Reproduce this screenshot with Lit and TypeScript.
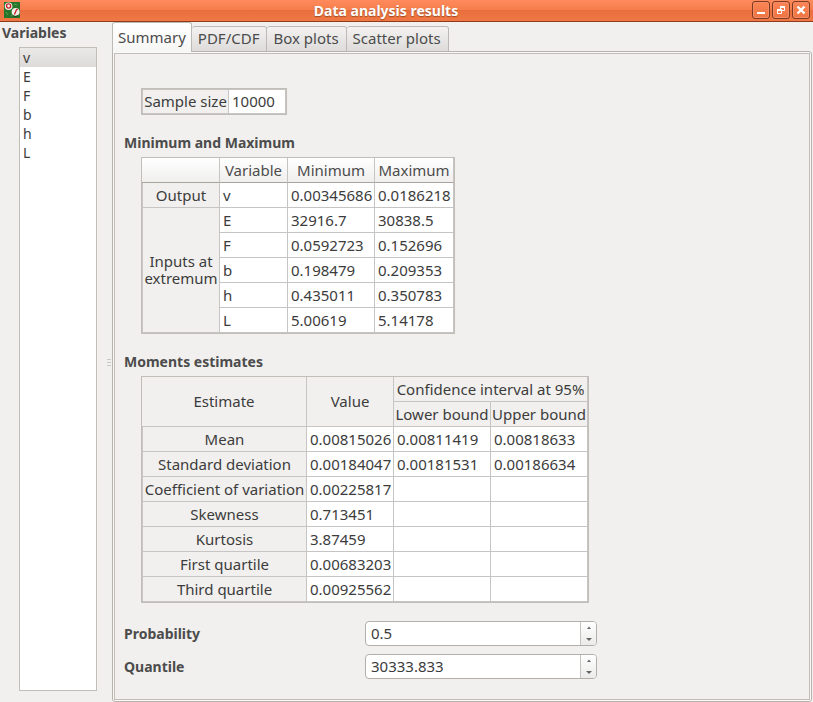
import { LitElement, html, css, svg } from "lit";
import { customElement, property, state } from "lit/decorators.js";

const FONT = css`"Noto Sans", "Open Sans", sans-serif`;

@customElement("title-bar")
class TitleBar extends LitElement {
  static styles = css`
    :host {
      display: flex;
      align-items: center;
      box-sizing: border-box;
      height: 22px;
      padding: 0 3px 1px 4px;
      background: linear-gradient(#ff8a5c, #f57e4c 45%, #e9703e 50%, #f07844);
      border-bottom: 1px solid #8f3c1c;
    }
    .logo { width: 16px; height: 16px; display: block; }
    .title {
      flex: 1;
      margin: 0;
      padding-top: 2px;
      text-align: center;
      font: bold 14px/18px ${FONT};
      color: #fff;
      text-shadow: 0 1px 1px #a04a26;
    }
    .controls { display: flex; gap: 2px; }
    button {
      box-sizing: border-box;
      width: 18px;
      height: 18px;
      padding: 0;
      border: 1px solid #7e3a20;
      border-radius: 3px;
      background: linear-gradient(#fb8557, #ee7442);
      box-shadow: inset 0 0 0 1px #f58e66;
    }
    button svg { display: block; width: 16px; height: 16px; }
  `;

  render() {
    const glyphs = [
      ["Minimize", svg`<path d="M4 10h8v2h-8z" fill="#fff"/>`],
      ["Restore", svg`<path d="M7.5 4.5h4v4h-4zM4.5 7.5h4v4h-4z" fill="none" stroke="#fff"/><path d="M7 4h5v2h-5zM4 7h5v2h-5z" fill="#fff"/>`],
      ["Close", svg`<path d="M4.5 4.5L11.5 11.5M11.5 4.5L4.5 11.5" stroke="#fff" stroke-width="2.4"/>`],
    ];
    return html`
      <svg class="logo" viewBox="0 0 16 16" aria-hidden="true">
        <rect width="16" height="16" fill="#26752b" />
        <path d="M2 10l2 3M7 13l2 1M10 2l3 1" stroke="#5aa04e" />
        <circle cx="4.6" cy="4.2" r="3.8" fill="#f4efe9" />
        <circle cx="4.6" cy="4" r="2.1" fill="none" stroke="#c8202a" stroke-width="1.3" />
        <circle cx="11.6" cy="10" r="4" fill="#f4efe9" />
        <path d="M10.4 12.4l2-4.4l1.4-1" fill="none" stroke="#c8202a" stroke-width="1.3" />
        <path d="M8.4 13a4 4 0 0 0 6 0" fill="none" stroke="#143d17" />
      </svg>
      <h1 class="title">Data analysis results</h1>
      <div class="controls">
        ${glyphs.map(([label, shape]) => html`
          <button aria-label=${label}><svg viewBox="0 0 16 16">${shape}</svg></button>`)}
      </div>
    `;
  }
}

@customElement("spin-box")
class SpinBox extends LitElement {
  @property() label = "";
  @property() value = "";

  static styles = css`
    :host { display: grid; grid-template-columns: 241px 232px; align-items: center; }
    label { font: bold 14px/20px ${FONT}; color: #4c4c4c; }
    .box {
      display: flex;
      box-sizing: border-box;
      height: 25px;
      border: 1px solid #b2aea9;
      border-radius: 4px;
      background: #fff;
      overflow: hidden;
    }
    input {
      flex: 1;
      min-width: 0;
      padding: 0 5px;
      border: 0;
      outline: 0;
      background: none;
      font: 15px/23px ${FONT};
      color: #3c3c3c;
    }
    .steps {
      display: flex;
      flex-direction: column;
      width: 15px;
      border-left: 1px solid #c6c3bf;
      background: linear-gradient(#fff, #ecebea);
    }
    button {
      flex: 1;
      display: flex;
      align-items: center;
      justify-content: center;
      padding: 0;
      border: 0;
      background: none;
    }
    svg { width: 6px; height: 3px; }
  `;

  render() {
    return html`
      <label for="field">${this.label}</label>
      <div class="box">
        <input id="field" type="text" .value=${this.value} />
        <div class="steps">
          <button aria-label="Increase"><svg viewBox="0 0 6 3"><path d="M1 3L3 0.5L5 3z" fill="#666" /></svg></button>
          <button aria-label="Decrease"><svg viewBox="0 0 6 3"><path d="M0 0h6L3 3z" fill="#666" /></svg></button>
        </div>
      </div>
    `;
  }
}

@customElement("app-root")
class AppRoot extends LitElement {
  @state() private tab = "Summary";

  static styles = css`
    :host {
      display: flex;
      flex-direction: column;
      min-height: 100vh;
      background: #f1f0ee;
      color: #3c3c3c;
      font: 15px/19px ${FONT};
    }
    .body { flex: 1; display: flex; }
    .variables { display: flex; flex-direction: column; width: 97px; padding-bottom: 11px; }
    .variables label { padding: 1px 2px 5px; font: bold 14px/19px ${FONT}; color: #4c4c4c; }
    .list {
      flex: 1;
      margin: 0 0 0 19px;
      padding: 0;
      border: 1px solid #c1bdb7;
      border-radius: 0;
      outline: 0;
      background: #fff;
      overflow: hidden;
      font: inherit;
    }
    .list option {
      box-sizing: border-box;
      height: 19px;
      min-height: 19px;
      padding: 0 3px;
      font: 14px/19px ${FONT};
      color: #3c3c3c;
    }
    .list option:checked { background: linear-gradient(#eae9e7, #dcdbd9); color: #3c3c3c; }
    .splitter { width: 15px; display: flex; align-items: center; justify-content: flex-end; }
    .grip {
      width: 4px;
      height: 7px;
      margin-right: 1px;
      background: repeating-linear-gradient(#c9c7c4 0 1px, transparent 1px 3px);
    }
    .main { flex: 1; display: flex; flex-direction: column; min-width: 0; padding-right: 1px; }
    .tabs { display: flex; align-items: flex-end; height: 30px; margin-bottom: -1px; }
    .tab {
      box-sizing: border-box;
      height: 26px;
      padding: 0 7px 2px 6px;
      border: 1px solid #bdbab6;
      border-left-width: 0;
      border-radius: 3px 3px 0 0;
      background: linear-gradient(#f3f2f1, #dddcda);
      font: inherit;
      color: #4c4c4c;
    }
    .tab.active {
      position: relative;
      height: 30px;
      padding: 0 5px;
      border-left-width: 1px;
      border-bottom: 0;
      background: linear-gradient(#fff, #f6f6f5);
    }
    .frame {
      flex: 1;
      display: flex;
      padding: 1px;
      border: 1px solid #b6b3af;
      border-radius: 0 3px 3px 3px;
      background: #f9f9f8;
    }
    .page {
      flex: 1;
      padding: 34px 9px 19px;
      border: 1px solid #c1bdb7;
      background: #f1f0ee;
    }
    .heading { margin: 18px 0 4px; font: bold 14px/20px ${FONT}; color: #4c4c4c; }
    .grid {
      margin-left: 17px;
      border: 1px solid #c1bdb7;
      border-spacing: 0;
      table-layout: fixed;
    }
    .sample { width: 146px; }
    .extrema { width: 314px; }
    .moments { width: 448px; }
    .c57 { width: 57px; }
    .c68 { width: 68px; }
    .c78 { width: 78px; }
    .c79 { width: 79px; }
    .c87 { width: 87px; }
    .c97 { width: 97px; }
    .c165 { width: 165px; }
    th, td {
      box-sizing: border-box;
      height: 25px;
      padding: 0 0 0 3px;
      border: solid #c6c5c3;
      border-width: 0 1px 1px 0;
      background: #fff;
      font-weight: normal;
      line-height: 17px;
      text-align: left;
      white-space: nowrap;
    }
    th { padding: 0; background: #f1f0ee; text-align: center; }
    tbody th { border-left-width: 1px; }
    .sample th, .sample td { border-top-width: 1px; }
    .extrema thead th {
      background: linear-gradient(#fff, #f0efee);
      border-bottom-color: #aaa49e;
      color: #4c4c4c;
    }
    .form { display: grid; gap: 8px; margin-top: 18px; }
  `;

  render() {
    const tabs = ["Summary", "PDF/CDF", "Box plots", "Scatter plots"];
    return html`
      <title-bar></title-bar>
      <div class="body">
        <aside class="variables">
          <label for="vars">Variables</label>
          <select id="vars" class="list" size="6">
            ${["v", "E", "F", "b", "h", "L"].map((v, i) => html`<option ?selected=${i === 0}>${v}</option>`)}
          </select>
        </aside>
        <div class="splitter"><div class="grip"></div></div>
        <main class="main">
          <div class="tabs" role="tablist">
            ${tabs.map((t) => html`
              <button class="tab ${t === this.tab ? "active" : ""}" role="tab"
                aria-selected=${t === this.tab} @click=${() => (this.tab = t)}>${t}</button>`)}
          </div>
          <div class="frame">
            <div class="page">${this.tab === "Summary" ? this.summary() : ""}</div>
          </div>
        </main>
      </div>
    `;
  }

  private summary() {
    const inputs = [
      ["E", "32916.7", "30838.5"],
      ["F", "0.0592723", "0.152696"],
      ["b", "0.198479", "0.209353"],
      ["h", "0.435011", "0.350783"],
      ["L", "5.00619", "5.14178"],
    ];
    const moments = [
      ["Mean", "0.00815026", "0.00811419", "0.00818633"],
      ["Standard deviation", "0.00184047", "0.00181531", "0.00186634"],
      ["Coefficient of variation", "0.00225817", "", ""],
      ["Skewness", "0.713451", "", ""],
      ["Kurtosis", "3.87459", "", ""],
      ["First quartile", "0.00683203", "", ""],
      ["Third quartile", "0.00925562", "", ""],
    ];
    const cells = (row: string[]) => row.map((c) => html`<td>${c}</td>`);
    return html`
      <table class="grid sample">
        <colgroup><col class="c87" /><col class="c57" /></colgroup>
        <tbody><tr><th scope="row">Sample size</th><td>10000</td></tr></tbody>
      </table>

      <h2 class="heading">Minimum and Maximum</h2>
      <table class="grid extrema">
        <colgroup><col class="c78" /><col class="c68" /><col class="c87" /><col class="c79" /></colgroup>
        <thead>
          <tr><th></th><th scope="col">Variable</th><th scope="col">Minimum</th><th scope="col">Maximum</th></tr>
        </thead>
        <tbody>
          <tr><th scope="row">Output</th>${cells(["v", "0.00345686", "0.0186218"])}</tr>
          ${inputs.map((row, i) => html`<tr>
            ${i === 0 ? html`<th scope="rowgroup" rowspan="5">Inputs at<br />extremum</th>` : ""}${cells(row)}
          </tr>`)}
        </tbody>
      </table>

      <h2 class="heading">Moments estimates</h2>
      <table class="grid moments">
        <colgroup><col class="c165" /><col class="c87" /><col class="c97" /><col class="c97" /></colgroup>
        <thead>
          <tr>
            <th scope="col" rowspan="2">Estimate</th><th scope="col" rowspan="2">Value</th>
            <th scope="colgroup" colspan="2">Confidence interval at 95%</th>
          </tr>
          <tr><th scope="col">Lower bound</th><th scope="col">Upper bound</th></tr>
        </thead>
        <tbody>
          ${moments.map(([name, ...rest]) => html`<tr><th scope="row">${name}</th>${cells(rest)}</tr>`)}
        </tbody>
      </table>

      <div class="form">
        <spin-box label="Probability" value="0.5"></spin-box>
        <spin-box label="Quantile" value="30333.833"></spin-box>
      </div>
    `;
  }
}
